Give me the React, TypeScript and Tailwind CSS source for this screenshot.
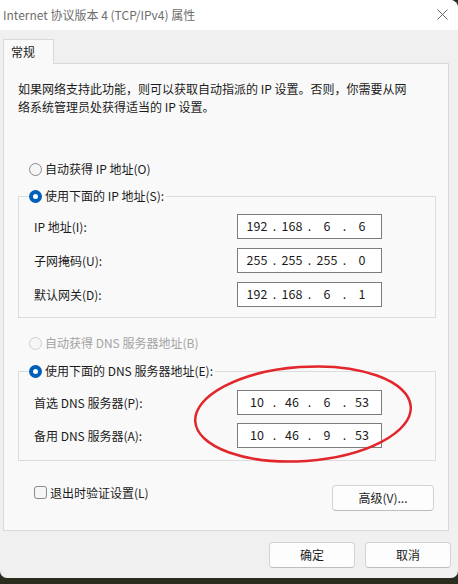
import React from 'react';

const font = "font-['Noto_Sans_CJK_SC','Noto_Sans',sans-serif]";

function Radio({ checked, disabled, label }: { checked?: boolean; disabled?: boolean; label: string }) {
  return (
    <div className="h-[18px] flex items-center gap-[3px]">
      {checked ? (
        <span className="w-[13px] h-[13px] rounded-full bg-[#005fb8] flex items-center justify-center">
          <span className="w-[5px] h-[5px] rounded-full bg-white" />
        </span>
      ) : (
        <span
          className={`w-[13px] h-[13px] rounded-full border bg-[#f6f6f6] ${disabled ? 'border-[#cfcfcf]' : 'border-[#8a8a8a]'}`}
        />
      )}
      <span className={disabled ? 'text-[#a3a3a3]' : 'text-[#1b1b1b]'}>{label}</span>
    </div>
  );
}

function IpBox({ parts }: { parts: string[] }) {
  return (
    <div className="w-[145px] h-[25px] border border-[#7c7c7c] bg-white flex items-center pl-[5px] text-[12.5px] text-[#1b1b1b]">
      {parts.map((p, i) => (
        <React.Fragment key={i}>
          <span className="w-[28px] text-center">{p}</span>
          {i < 3 && <span className="w-[7px] text-center">.</span>}
        </React.Fragment>
      ))}
    </div>
  );
}

function Row({ label, parts }: { label: string; parts: string[] }) {
  return (
    <div className="flex items-center h-[25px]">
      <span className="w-[203px] text-[#1b1b1b]">{label}</span>
      <IpBox parts={parts} />
    </div>
  );
}

function Button({ children, className = '' }: { children: React.ReactNode; className?: string }) {
  return (
    <button className={`h-[26px] bg-[#fdfdfd] border border-[#d3d3d3] border-b-[#bdbdbd] rounded-[4px] text-[12px] text-[#1b1b1b] ${className}`}>
      {children}
    </button>
  );
}

export default function App() {
  return (
    <div className={`w-[458px] h-[584px] bg-[#2a2c1e] relative overflow-hidden text-[12px] ${font}`}>
      <div className="h-[578px] bg-[#f0f0f0] rounded-b-[7px] rounded-tr-[8px] flex flex-col overflow-hidden">
        {/* Title bar */}
        <div className="h-[30px] bg-white flex items-center justify-between pl-[3px] pr-[10px] shrink-0">
          <span className="text-[#6d6d6d] text-[12px]">Internet 协议版本 4 (TCP/IPv4) 属性</span>
          <svg width="11" height="11" viewBox="0 0 11 11" className="mt-[-1px]">
            <path d="M0.5 0.5 L10.5 10.5 M10.5 0.5 L0.5 10.5" stroke="#6a6a6a" strokeWidth="1" />
          </svg>
        </div>

        {/* Body */}
        <div className="px-[3px] pt-[9px]">
          <div className="relative z-10 w-[51px] h-[25px] -mb-px bg-[#f9f9f9] border border-[#d9d9d9] border-b-0 flex items-center pl-[7px] text-[#1b1b1b]">
            常规
          </div>
          <div className="w-[446px] h-[468px] bg-[#f9f9f9] border border-[#d9d9d9] pl-[14px] pt-[16px]">
            <p className="leading-[18px] text-[#1b1b1b] whitespace-nowrap">
              <span className="block">如果网络支持此功能，则可以获取自动指派的 IP 设置。否则，你需要从网</span>
              <span className="block">络系统管理员处获得适当的 IP 设置。</span>
            </p>

            <div className="mt-[44px] ml-[11px]">
              <Radio label="自动获得 IP 地址(O)" />
            </div>

            <fieldset className="mt-[9px] w-[418px] border border-[#dcdcdc]">
              <legend className="ml-[10px] pr-[2px]">
                <Radio checked label="使用下面的 IP 地址(S):" />
              </legend>
              <div className="pl-[15px] pt-[9px] pb-[10px] flex flex-col gap-[9px]">
                <Row label="IP 地址(I):" parts={['192', '168', '6', '6']} />
                <Row label="子网掩码(U):" parts={['255', '255', '255', '0']} />
                <Row label="默认网关(D):" parts={['192', '168', '6', '1']} />
              </div>
            </fieldset>

            <div className="mt-[16px] ml-[11px]">
              <Radio disabled label="自动获得 DNS 服务器地址(B)" />
            </div>

            <fieldset className="mt-[10px] w-[418px] border border-[#dcdcdc]">
              <legend className="ml-[10px] pr-[2px]">
                <Radio checked label="使用下面的 DNS 服务器地址(E):" />
              </legend>
              <div className="pl-[15px] pt-[10px] pb-[12px] flex flex-col gap-[8px]">
                <Row label="首选 DNS 服务器(P):" parts={['10', '46', '6', '53']} />
                <Row label="备用 DNS 服务器(A):" parts={['10', '46', '9', '53']} />
              </div>
            </fieldset>

            <div className="mt-[24px] w-[418px] flex items-start justify-between">
              <div className="mt-[1px] ml-[16px] h-[13px] flex items-center gap-[3px]">
                <span className="w-[13px] h-[13px] rounded-[3px] border border-[#8a8a8a] bg-[#f6f6f6]" />
                <span className="text-[#1b1b1b]">退出时验证设置(L)</span>
              </div>
              <Button className="w-[102px] mr-[2px]">高级(V)...</Button>
            </div>
          </div>

          <div className="mt-[11px] flex justify-end gap-[10px] pr-[4px]">
            <Button className="w-[86px]">确定</Button>
            <Button className="w-[86px]">取消</Button>
          </div>
        </div>
      </div>

      {/* Red annotation ellipse */}
      <svg className="absolute left-[190px] top-[360px]" width="230" height="108" viewBox="0 0 230 108">
        <ellipse cx="113" cy="54" rx="108" ry="47" transform="rotate(-4 113 54)" fill="none" stroke="#e2262b" strokeWidth="2.5" />
      </svg>
    </div>
  );
}
